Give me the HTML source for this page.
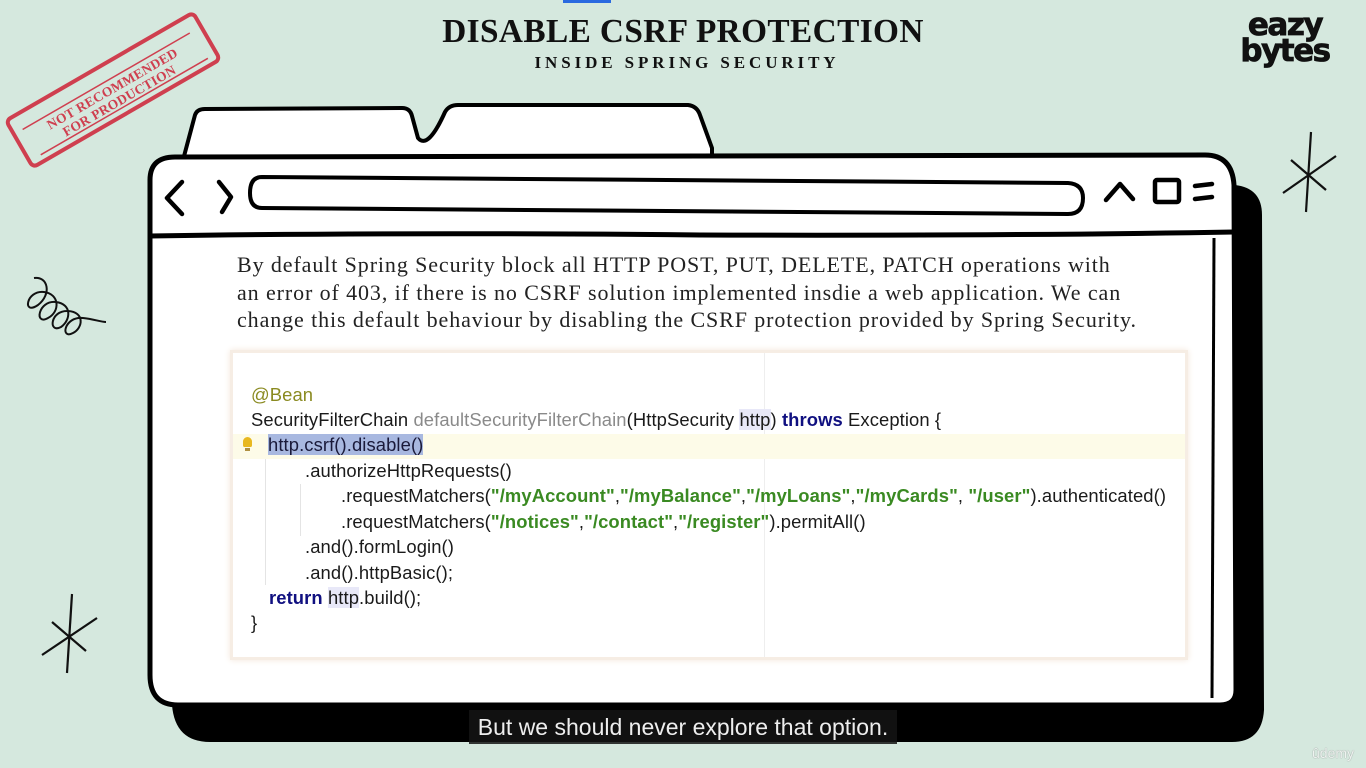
<!DOCTYPE html>
<html><head><meta charset="utf-8"><style>
body{margin:0;width:1366px;height:768px;overflow:hidden;background:#d5e8de;position:relative;font-family:"Liberation Sans",sans-serif}
.abs{position:absolute}
.t1{left:0;width:1366px;text-align:center;top:13px;font:bold 33.3px "Liberation Serif",serif;color:#111;letter-spacing:0.4px}
.t2{left:4px;width:1366px;text-align:center;top:53px;font:bold 17px "Liberation Serif",serif;color:#111;letter-spacing:3.9px}
.logo{left:1238px;top:12px;width:94px;font:bold 31px/26px "DejaVu Sans",sans-serif;color:#111;text-align:center;letter-spacing:-1.5px;-webkit-text-stroke:0.8px #111}
.para{left:237px;top:251px;width:960px;font:22px/27.5px "Liberation Serif",serif;color:#222;white-space:nowrap;letter-spacing:0.9px}
.code{left:233px;top:353px;width:952px;height:304px;background:#fff;box-shadow:0 0 0 3px #f6ede4, 0 0 6px 3px #f3e6da}
.ln{position:absolute;left:18px;font:18.4px "Liberation Sans",sans-serif;color:#1a1a1a;white-space:nowrap;letter-spacing:0.1px}
.s{color:#3a8a22;font-weight:bold}
.k{color:#101080;font-weight:bold}
.g{color:#8a8a8a}
.a{color:#8a8a20}
.sub{left:469px;top:710px;width:428px;height:34px;background:rgba(20,20,20,0.85);color:#eee;font:23px/34px "Liberation Sans",sans-serif;text-align:center}
</style></head><body>
<svg class="abs" style="left:0;top:0" width="1366" height="768">
 <g transform="translate(113,90) rotate(-30)" fill="none" stroke="#cf3f4f">
  <rect x="-108" y="-27" width="216" height="54" rx="5" stroke-width="4"/>
  <line x1="-98" y1="-11" x2="95" y2="-11" stroke-width="1.5"/>
  <line x1="-95" y1="20" x2="98" y2="20" stroke-width="1.5"/>
  <text x="0" y="3" text-anchor="middle" fill="#cf3f4f" stroke="none" font-family="Liberation Serif" font-size="13.5" font-weight="bold" letter-spacing="0.3">NOT RECOMMENDED</text>
  <text x="0" y="17" text-anchor="middle" fill="#cf3f4f" stroke="none" font-family="Liberation Serif" font-size="13.5" font-weight="bold" letter-spacing="0.3">FOR PRODUCTION</text>
 </g>
 <path d="M34 278 C48 276 52 294 38 305 C22 316 26 290 44 292 C60 294 60 312 48 318 C34 326 38 300 56 302 C72 304 71 320 61 327 C48 334 50 310 68 311 C85 312 83 328 73 333 C60 340 64 316 83 318 C94 319 100 322 106 322" fill="none" stroke="#111" stroke-width="2"/>
 <g stroke="#111" stroke-width="2.2" fill="none">
  <line x1="1311" y1="132" x2="1306" y2="212"/><line x1="1283" y1="193" x2="1336" y2="156"/><line x1="1291" y1="160" x2="1326" y2="190"/>
  <line x1="72" y1="594" x2="67" y2="673"/><line x1="42" y1="655" x2="97" y2="618"/><line x1="52" y1="622" x2="86" y2="651"/>
 </g>
 <path d="M175 190 L1235 185 Q1262 188 1262 215 L1264 710 Q1262 742 1232 742 L210 742 Q175 742 172 705 Z" fill="#000"/>
 <path d="M183 160 L195 115 Q197 109 205 109 L402 108 Q410 108 412 116 L418 138 Q428 150 445 112 Q449 105 458 105 L688 105 Q697 106 700 115 L712 148 L712 165 L183 165 Z" fill="#fff" stroke="#000" stroke-width="4" stroke-linejoin="round"/>
 <path d="M150 180 Q150 157 175 157 L1205 155 Q1232 155 1234 185 L1236 690 Q1236 705 1220 705 L178 705 Q150 705 150 675 Z" fill="#fff" stroke="#000" stroke-width="5"/>
 <path d="M150 236 Q400 232 700 235 Q1000 236 1234 232" fill="none" stroke="#000" stroke-width="5"/>
 <path d="M1214 238 L1212 698" stroke="#000" stroke-width="3"/>
 <path d="M262 177 L1068 183 Q1083 184 1083 198 Q1083 214 1068 214 L262 208 Q250 208 250 193 Q250 177 262 177 Z" fill="none" stroke="#000" stroke-width="4"/>
 <g stroke="#000" stroke-width="4.5" fill="none" stroke-linecap="round" stroke-linejoin="round">
  <path d="M182 182 L167 198 L182 214"/>
  <path d="M219 182 L231 197 L222 212"/>
  <path d="M1106 200 L1120 184 L1133 199"/>
  <rect x="1155" y="180" width="24" height="22" rx="2"/>
  <path d="M1195 186 L1212 184 M1195 199 L1212 197"/>
 </g>
</svg>
<div class="abs t1">DISABLE CSRF PROTECTION</div>
<div class="abs t2">INSIDE SPRING SECURITY</div>
<div class="abs logo">eazy<br>bytes</div>
<div class="abs para">By default Spring Security block all HTTP POST, PUT, DELETE, PATCH operations with<br>an error of 403, if there is no CSRF solution implemented insdie a web application. We can<br>change this default behaviour by disabling the CSRF protection provided by Spring Security.</div>
<div class="abs code">
 <div style="position:absolute;left:531px;top:0;width:1px;height:304px;background:#eee"></div>
 <div style="position:absolute;left:0;top:81px;width:952px;height:25px;background:#fdfbe8"></div>
 <div style="position:absolute;left:32px;top:106px;width:1px;height:126px;background:#e4e4e4"></div>
 <div style="position:absolute;left:67px;top:131px;width:1px;height:52px;background:#e4e4e4"></div>
 <div style="position:absolute;left:10px;top:84px;width:9px;height:10px;border-radius:5px 5px 2px 2px;background:#e8b820"></div>
 <div style="position:absolute;left:12px;top:95px;width:5px;height:3px;background:#b09040"></div>
 <div class="ln a" style="top:31px">@Bean</div>
 <div class="ln" style="top:56px">SecurityFilterChain <span class="g">defaultSecurityFilterChain</span>(HttpSecurity <span style="background:#e8e8f8">http</span>) <span class="k">throws</span> Exception {</div>
 <div class="ln" style="top:81px;left:35px"><span style="background:#a8b8e0;color:#1a1a3a">http.csrf().disable()</span></div>
 <div class="ln" style="top:107px;left:72px">.authorizeHttpRequests()</div>
 <div class="ln" style="top:132px;left:108px">.requestMatchers(<span class="s">"/myAccount"</span>,<span class="s">"/myBalance"</span>,<span class="s">"/myLoans"</span>,<span class="s">"/myCards"</span>, <span class="s">"/user"</span>).authenticated()</div>
 <div class="ln" style="top:158px;left:108px">.requestMatchers(<span class="s">"/notices"</span>,<span class="s">"/contact"</span>,<span class="s">"/register"</span>).permitAll()</div>
 <div class="ln" style="top:183px;left:72px">.and().formLogin()</div>
 <div class="ln" style="top:209px;left:72px">.and().httpBasic();</div>
 <div class="ln" style="top:234px;left:36px"><span class="k">return</span> <span style="background:#e8e8f8">http</span>.build();</div>
 <div class="ln" style="top:259px">}</div>
</div>
<div class="abs sub">But we should never explore that option.</div>
<div class="abs" style="left:1312px;top:745px;font:14px 'Liberation Sans',sans-serif;color:#eef3f0;text-shadow:0 0 1px #777">ûdemy</div>
<div class="abs" style="left:563px;top:0;width:48px;height:3px;background:#2a6ae0"></div>
</body></html>
